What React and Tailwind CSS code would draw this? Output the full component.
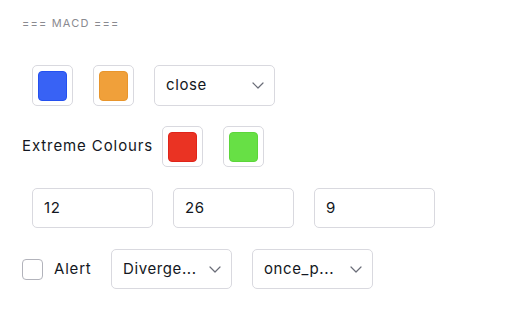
import React from 'react';

const Chevron = () => (
  <svg width="12" height="7" viewBox="0 0 12 7" fill="none" className="shrink-0">
    <path d="M1 1l5 5 5-5" stroke="#6a6d78" strokeWidth="1.2" strokeLinecap="round" strokeLinejoin="round" />
  </svg>
);

// color picker button with the swatch inside
const Swatch = ({ fill, edge }) => (
  <div className="w-[41px] h-[41px] border border-[#d9d9df] rounded-[5px] flex items-center justify-center bg-white shrink-0">
    <div className="w-[29px] h-[30px] rounded-[4px] border" style={{ background: fill, borderColor: edge }} />
  </div>
);

const Select = ({ value, h = 'h-[41px]' }) => (
  <div className={`w-[121px] ${h} border border-[#d9d9df] rounded-[5px] flex items-center justify-between pl-[11px] pr-[10px] shrink-0`}>
    <span className="text-[15px] tracking-[0.6px] text-[#131722]">{value}</span>
    <Chevron />
  </div>
);

const NumberBox = ({ value }) => (
  <div className="w-[121px] h-[40px] border border-[#d9d9df] rounded-[5px] flex items-center px-[11px] shrink-0">
    <span className="text-[15px] tracking-[0.6px] text-[#131722]">{value}</span>
  </div>
);

export default function App() {
  return (
    <div className="w-[512px] h-[329px] bg-white pl-[22px] pt-[16px] font-['Inter',sans-serif] text-[#131722]">
      <div className="text-[11px] leading-[14px] tracking-[1.2px] text-[#8a8a90]">=== MACD ===</div>

      {/* line colours + source */}
      <div className="mt-[35px] flex items-center gap-5 pl-[10px]">
        <Swatch fill="#3862f5" edge="#2450f0" />
        <Swatch fill="#f0a03a" edge="#e8952c" />
        <Select value="close" />
      </div>

      <div className="mt-5 flex items-center">
        <span className="w-[140px] text-[15px] tracking-[0.9px]">Extreme Colours</span>
        <div className="flex items-center gap-5">
          <Swatch fill="#ea3323" edge="#e0241a" />
          <Swatch fill="#67e045" edge="#5cd63a" />
        </div>
      </div>

      {/* fast / slow / signal */}
      <div className="mt-[21px] flex items-center gap-5 pl-[10px]">
        <NumberBox value="12" />
        <NumberBox value="26" />
        <NumberBox value="9" />
      </div>

      <div className="mt-[21px] flex items-center">
        <div className="w-[21px] h-[21px] rounded-[4px] border border-[#b2b3bb] shrink-0" />
        <span className="ml-[11px] w-[57px] text-[15px] tracking-[0.8px]">Alert</span>
        <div className="flex items-center gap-5">
          <Select value="Diverge..." h="h-[40px]" />
          <Select value="once_p..." h="h-[40px]" />
        </div>
      </div>
    </div>
  );
}
